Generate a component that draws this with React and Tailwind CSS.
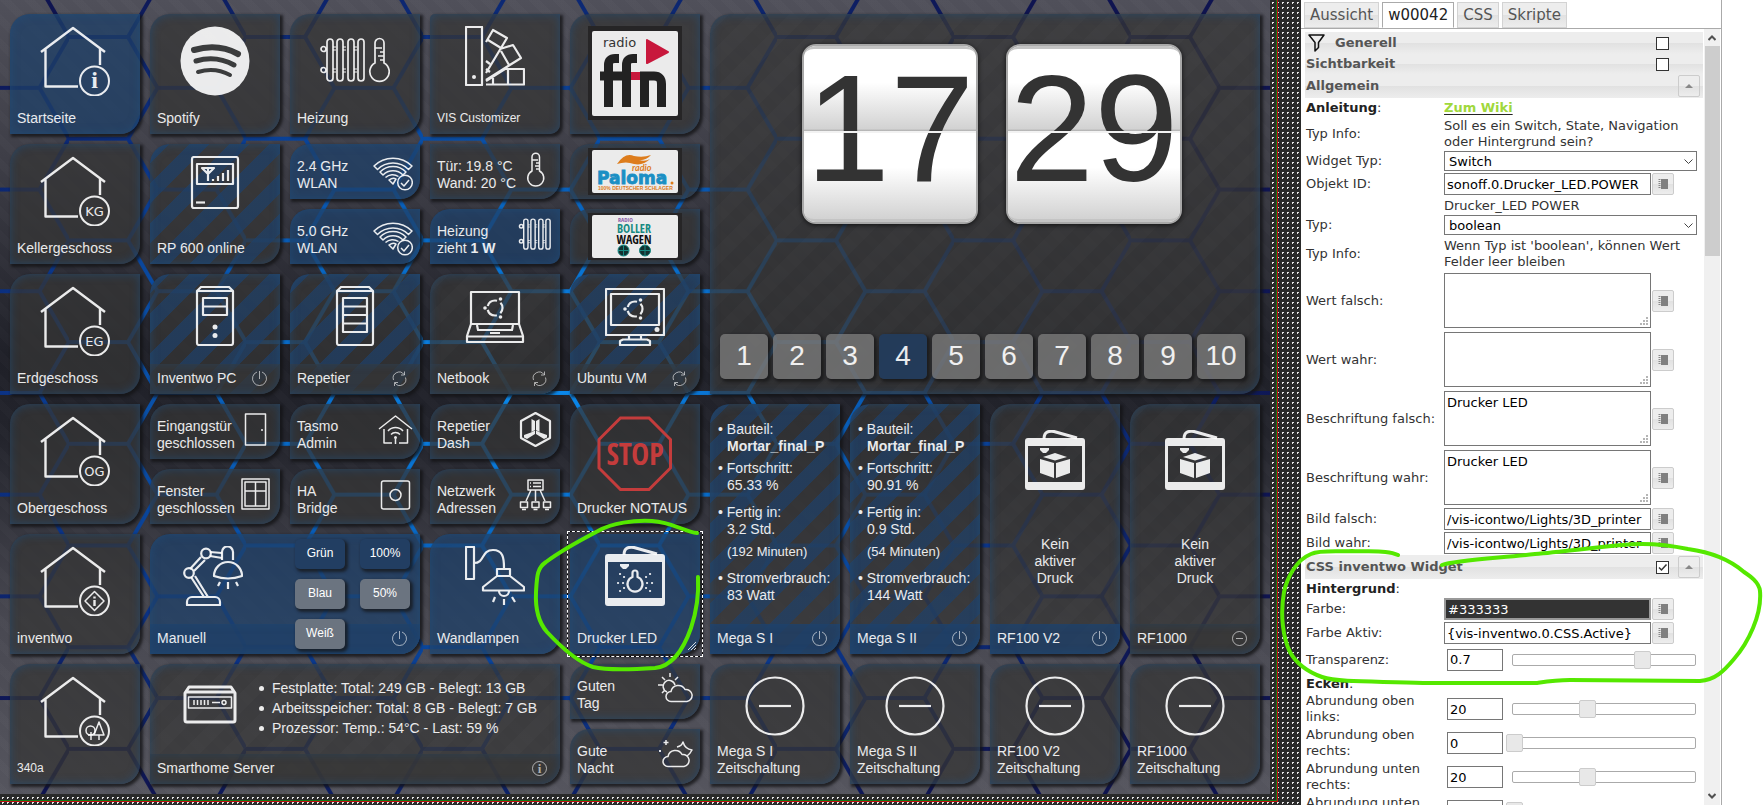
import { useState } from 'react'
import clsx from 'clsx'

const OFF = 'bg-[#363636]/75'
const ON = 'bg-[#1f4068]/75'
const GLOW = 'shadow-[inset_0_0_10px_rgba(32,78,125,0.65),2px_2px_3px_1px_rgba(20,20,22,0.8)]'
const STRIPES_BLUE =
  'bg-[linear-gradient(135deg,#1f4068b8_25%,transparent_25%,transparent_50%,#1f4068b8_50%,#1f4068b8_75%,transparent_75%)] bg-[length:40px_40px]'
const STRIPES_GRAY =
  'bg-[linear-gradient(135deg,#ffffff04_25%,transparent_25%,transparent_50%,#ffffff04_50%,#ffffff04_75%,transparent_75%)] bg-[length:40px_40px]'

/* ---------- icons ---------- */

function Svg({ w, h = w, sw = 2.2, children, className }) {
  return (
    <svg
      width={w}
      height={h}
      viewBox={`0 0 ${w} ${h}`}
      fill="none"
      stroke="currentColor"
      strokeWidth={sw}
      strokeLinejoin="round"
      className={clsx('shrink-0', className)}
      aria-hidden="true"
    >
      {children}
    </svg>
  )
}

function House({ text, children }) {
  return (
    <Svg w={70} sw={2.4}>
      <path d="M1 26 L33 2 L65 26 M5.500 22 V60.500 H38 M60 22 V39" />
      <circle cx="54.500" cy="55" r="14.500" strokeWidth="2" />
      {text && (
        <text
          x="54.500"
          y="59.500"
          textAnchor="middle"
          fill="currentColor"
          stroke="none"
          fontSize="13"
          fontFamily="DejaVu Sans, sans-serif"
        >
          {text}
        </text>
      )}
      {children}
    </Svg>
  )
}

const Spotify = () => (
  <svg width="70" height="70" viewBox="0 0 70 70" aria-hidden="true">
    <circle cx="35" cy="35" r="34.500" fill="currentColor" />
    <g fill="none" stroke="#3b3c3d" strokeLinecap="round">
      <path d="M14 24 Q38 17 58 28" strokeWidth="6" />
      <path d="M16 35 Q36 29 54 39" strokeWidth="5" />
      <path d="M18 46 Q35 41 50 49" strokeWidth="4" />
    </g>
  </svg>
)

const RadiatorBars = () => (
  <>
    {[0, 10, 21, 31].map((x) => (
      <rect key={x} x={7 + x} y="1" width="6" height="42" rx="3" />
    ))}
    {[15, 25, 36].map((x) => (
      <path key={x} d={`M${x - 2} 9 h3 M${x - 2} 12 h3 M${x - 2} 31 h3 M${x - 2} 34 h3`} strokeWidth="1" />
    ))}
    <circle cx="3.500" cy="11" r="2.500" />
    <circle cx="3.500" cy="32" r="2.500" />
  </>
)

const Heating = () => (
  <Svg w={70} h={70} sw={1.7}>
    <g transform="translate(0 12)">
      <RadiatorBars />
      <path d="M55 25 V5 a4.500 4.500 0 0 1 9 0 V25 a9.700 9.700 0 1 1 -9 0 Z M55 10 h7 M60 14 h4 M58 18 h6 M60 22 h4" />
    </g>
  </Svg>
)

const RadiatorSmall = () => (
  <svg width="35" height="35" viewBox="-1 -2 49 49" fill="none" stroke="currentColor" strokeWidth="2" aria-hidden="true">
    <RadiatorBars />
  </svg>
)

const Swatches = () => (
  <Svg w={60}>
    <rect x="1" y="1" width="16" height="58" />
    <circle cx="9" cy="51" r="2" fill="currentColor" stroke="none" />
    <path d="M21 16 L28 4 L42 12 L21 47 M23 14 L36 22 M35 23 L48 19 L56 32 L21 54 M36 25 L44 39 M21 58.500 H59 V43 H40 L21 55 M43 43 V58 M28 58 V52 M21 35 l4 3 M21 43 l4 3" />
  </Svg>
)

const Rp600 = () => (
  <Svg w={60}>
    <rect x="7" y="0" width="46" height="51" rx="2" transform="translate(0 1)" />
    <rect x="12" y="8" width="36" height="20" />
    <path d="M17 12 h12 l-6 6 z M23 12 V25 M28 25 v-2 M33 25 v-5 M38 25 v-8 M43 25 v-11" />
    <path d="M11 46.500 h9" />
  </Svg>
)

const Wifi = () => (
  <Svg w={40} sw={1.5}>
    <path d="M1 14 a27 27 0 0 1 38 0 l-3.500 3.500 a22 22 0 0 0 -31 0 z M7 20 a18 18 0 0 1 26 0 l-3 3 a14 14 0 0 0 -20 0 z M12.500 25.500 a10.500 10.500 0 0 1 13 -1 M16 28 q4 -3 7 -1 l-3 5 z" />
    <circle cx="32" cy="30.500" r="7.300" />
    <path d="M28 31 l3 3 l5 -6" />
  </Svg>
)

const Thermometer = () => (
  <Svg w={35} sw={1.5}>
    <path d="M14 19 V5 a3.500 3.500 0 0 1 7.500 0 V19 a8 8 0 1 1 -7.500 0 Z M14 8 h6 M18 11 h3.500 M17 14 h4.500 M18 17 h3.500" />
  </Svg>
)

const PcTower = ({ server }) => (
  <Svg w={60}>
    <path d="M12 5 L16 1 H44 L48 5 V57 a2 2 0 0 1 -2 2 H14 a2 2 0 0 1 -2 -2 Z M12 5 H48" />
    {server ? (
      <path d="M18 12 H42 V46 H18 Z M18 20.500 H42 M18 29 H42 M18 37.500 H42" />
    ) : (
      <>
        <path d="M18 12 H42 V29 H18 Z M18 20.500 H42" />
        <circle cx="30" cy="41" r="2.500" fill="currentColor" stroke="none" />
        <circle cx="30" cy="49.500" r="2.500" fill="currentColor" stroke="none" />
      </>
    )}
  </Svg>
)

const UbuntuMark = ({ x, y }) => (
  <g transform={`translate(${x} ${y})`}>
    <circle r="7.500" strokeWidth="2.200" strokeDasharray="11.700 4" strokeDashoffset="-9.800" />
    <g fill="currentColor" stroke="none">
      <circle cx="-10" cy="0" r="1.800" />
      <circle cx="5.500" cy="-9" r="1.800" />
      <circle cx="5.500" cy="9" r="1.800" />
    </g>
  </g>
)

const Laptop = () => (
  <Svg w={60}>
    <path d="M6 38 V6 H54 V38 Z M6 38 L2 50 V56 H58 V50 L54 38 M2 50.500 H58 M12 39 L13 44 H47 L48 39 M25 47 H35" />
    <UbuntuMark x={30} y={22} />
  </Svg>
)

const Monitor = () => (
  <Svg w={60}>
    <path d="M1 3 H59 V49 H1 Z M6 8 H54 V39 H6 Z M24 49 V53 M36 49 V53 M15 59 V55 L18 53.500 H42 L45 55 V59 Z" />
    <circle cx="52" cy="43.500" r="2.500" fill="currentColor" stroke="none" />
    <UbuntuMark x={30} y={23} />
  </Svg>
)

const Door = () => (
  <Svg w={35} sw={1.5}>
    <rect x="7.500" y="2" width="20" height="31" />
    <circle cx="24" cy="18" r="1" fill="currentColor" stroke="none" />
  </Svg>
)

const WindowIcon = () => (
  <Svg w={35} sw={1.5}>
    <path d="M4 2 H31 V32 H4 Z M7 5 H28 V29 H7 Z M17.500 5 V29 M7 14 H28" />
  </Svg>
)

const Tasmo = () => (
  <Svg w={35} sw={1.5}>
    <path d="M1 17 L17.500 4 L34 17 M6 17 V31 H14 M21 31 H29.500 V17 M10 19 a10 10 0 0 1 15 0 M13 22.500 a6 6 0 0 1 9 0 M17.500 27 V32" />
    <circle cx="17.500" cy="25.500" r="1.500" fill="currentColor" stroke="none" />
  </Svg>
)

const HaBridge = () => (
  <Svg w={35} sw={1.5}>
    <rect x="3.500" y="4" width="28" height="28" rx="2" />
    <circle cx="17.500" cy="18" r="5.500" />
  </Svg>
)

const RepetierDash = () => (
  <Svg w={35}>
    <path d="M17.500 1 L32 9 V26 L17.500 34 L3 26 V9 Z" />
    <g fill="currentColor" stroke="none">
      <path d="M13.500 7 l3.500 2 v9 l-3.500 2 z M21.500 7 l-3.500 2 v9 l3.500 2 z" />
      <path d="M13 20.500 L17 18.500 V22 L9 27 L6 25.500 V23 Z M22 20.500 L18 18.500 V22 L26 27 L29 25.500 V23 Z" />
    </g>
  </Svg>
)

const Network = () => (
  <Svg w={35} sw={1.5}>
    <path d="M10 3 H25 V13 H10 Z M15 6 h8 M15 9.500 h8 M12 6 h1 M12 9.500 h1 M13 13 L8 24 M17.500 13 V24 M22 13 L27 24" />
    <path d="M2.500 25 h7 v5.500 h-7 z M14 25 h7 v5.500 h-7 z M25.500 25 h7 v5.500 h-7 z M4 32.500 h4 M15.500 32.500 h4 M27 32.500 h4" />
  </Svg>
)

const StopSign = () => (
  <svg width="76" height="76" viewBox="0 0 76 76" className="text-[#c43c3c]" aria-hidden="true">
    <path d="M23.500 2 H52 L73.500 23.500 V52 L52 73.500 H23.500 L2 52 V23.500 Z" fill="none" stroke="currentColor" strokeWidth="3" />
    <text
      x="38"
      y="49"
      textAnchor="middle"
      fill="currentColor"
      fontSize="30"
      fontWeight="700"
      fontFamily="Liberation Sans Narrow, Open Sans Condensed, DejaVu Sans Condensed, sans-serif"
    >
      STOP
    </text>
  </svg>
)

const DeskLamp = () => (
  <Svg w={60}>
    <path d="M4 59 V56 a5 5 0 0 1 5 -5 H32 a5 5 0 0 1 5 5 V59 Z M8 31 L21 51 M12 30 L25 51 M7 23 L18 11 M11 25 L22 14 M27 6 L39 7 M27 10 L39 12" />
    <circle cx="6" cy="27" r="4.800" />
    <circle cx="23" cy="7.500" r="4.800" />
    <path d="M39 14 V6 a5.500 5.500 0 0 1 11 0 V14 M31 30 a14 14 0 0 1 28 0 q-14 5 -28 0 z M37 36 l-2 4 M45 36 v7 M53 36 l2 4" />
  </Svg>
)

const WallLamp = () => (
  <Svg w={60}>
    <path d="M1 1 H9 V33 H1 Z M9 17 C20 17 16 4 28 4 C38 4 39 12 39 22 M32 23 H45 V30 H32 Z M32 30 L18 41 V44.500 H59 V41 L45 30 M34 45 a5 5 0 0 0 10 0 M30 51 l-2 5 M39 53 v6 M47 51 l3 5" />
  </Svg>
)

const Printer = ({ led }) => (
  <Svg w={60}>
    <path d="M19 9 C19 1 24 1 29 1.500 L52 8" strokeWidth="3" />
    <path
      fillRule="evenodd"
      fill="currentColor"
      stroke="none"
      d="M3 8 H57 a3 3 0 0 1 3 3 V57 a3 3 0 0 1 -3 3 H3 a3 3 0 0 1 -3 -3 V11 a3 3 0 0 1 3 -3 Z M3 16 V52 H57 V16 Z"
    />
    <path d="M15 18 H24 V20 L21 23 H18 L15 20 Z" fill="currentColor" stroke="none" />
    {led ? (
      <>
        <path d="M27.500 31 V27 a2.500 2.500 0 0 1 5 0 V31 a7.500 7.500 0 1 1 -5 0 Z" />
        <path
          d="M15 28 h.1 M19 31 h.1 M13 37 h.1 M18 37 h.1 M15 45 h.1 M19 42 h.1 M45 28 h.1 M41 31 h.1 M47 37 h.1 M42 37 h.1 M45 45 h.1 M41 42 h.1"
          strokeLinecap="round"
        />
      </>
    ) : (
      <path
        d="M30 23 L42 27 L30 30.500 L18 27 Z M15 29 L29 33 V48 L15 43 Z M45 29 L31 33 V48 L45 43 Z"
        fill="currentColor"
        stroke="none"
      />
    )}
  </Svg>
)

const ServerBox = () => (
  <Svg w={60}>
    <path d="M4 23 L8 17 H50 L54 23 V50 a2 2 0 0 1 -2 2 H6 a2 2 0 0 1 -2 -2 Z M4 22 H54" strokeWidth="3" transform="translate(0 -2)" />
    <path d="M7.500 25 H50.500 V36 H7.500 Z M13 28 v5 M16.500 28 v5 M20 28 v5 M23.500 28 v5 M27 28 v5 M31 30.500 h8" strokeWidth="1.500" />
    <circle cx="43" cy="30.500" r="2" strokeWidth="1.500" />
  </Svg>
)

const SunCloud = () => (
  <Svg w={35} sw={1.5}>
    <path d="M13 29.500 a5 5 0 0 1 0 -10 a7.500 7.500 0 0 1 14 -2 a6 6 0 0 1 2 12 z M9 20 a6 6 0 1 1 8 -7 M12 1 v4 M4 5 l3 3 M0 13 h5 M4 21 l3 -3 M20 5 l-3 3" />
  </Svg>
)

const MoonCloud = () => (
  <Svg w={35} sw={1.5}>
    <path d="M10 29.500 a5 5 0 0 1 0 -10 a7.500 7.500 0 0 1 14 -2 a6 6 0 0 1 2 12 z M19 10 q5 -1 6 -5 q2 7 9 8 q-2 4 -5 6 M8 3 v5 M5.500 5.500 h5 M2 13 v2 M1 14 h2" />
  </Svg>
)

const Minus60 = () => (
  <Svg w={60}>
    <circle cx="30" cy="30" r="28.500" />
    <path d="M14 30 H46" />
  </Svg>
)

const Power = () => (
  <Svg w={15} sw={1}>
    <path d="M5 1 a7 7 0 1 0 5 0 M7.500 0 V8" />
  </Svg>
)

const Refresh = () => (
  <Svg w={15} sw={1}>
    <path d="M1.500 9 a6 6 0 0 1 10.500 -5.500 M13.500 6.500 a6 6 0 0 1 -10.500 5.500 M12.500 0.500 v3.500 h-3.500 M2.500 15 v-3.500 h3.500" />
  </Svg>
)

const MinusSmall = () => (
  <Svg w={15} sw={1}>
    <circle cx="7.500" cy="7.500" r="7" />
    <path d="M4 7.500 h7" />
  </Svg>
)

const InfoSmall = () => (
  <Svg w={15} sw={1}>
    <circle cx="7.500" cy="7.500" r="7" />
    <text x="7.500" y="11.500" textAnchor="middle" fill="currentColor" stroke="none" fontSize="13" fontWeight="700" fontFamily="Liberation Serif, serif">
      i
    </text>
  </Svg>
)

/* ---------- dashboard ---------- */

function HexBackground() {
  return (
    <svg className="absolute inset-0 h-full w-full" aria-hidden="true">
      <defs>
        <pattern id="hex" width="177" height="101.700" patternUnits="userSpaceOnUse" patternTransform="translate(69 37)">
          <path
            d="M0 0 H59 L88.500 50.850 H147.500 L177 0 M0 101.700 H59 L88.500 50.850 M147.500 50.850 L177 101.700"
            fill="none"
            stroke="#fff"
            strokeWidth="4"
          />
        </pattern>
        <mask id="hexMask">
          <rect width="100%" height="100%" fill="url(#hex)" />
        </mask>
        <radialGradient id="hexGlow" cx="0.42" cy="0.48" r="0.6">
          <stop offset="0" stopColor="#0b8cf0" />
          <stop offset="0.35" stopColor="#0868c4" />
          <stop offset="0.7" stopColor="#0b3284" />
          <stop offset="1" stopColor="#0f1450" />
        </radialGradient>
      </defs>
      <rect width="100%" height="100%" fill="url(#hexGlow)" mask="url(#hexMask)" />
    </svg>
  )
}

function Tile({ as: Tag = 'button', on, stripes, label, small, icon, footer, footerOn, tall, className, children, round }) {
  return (
    <Tag
      className={clsx(
        'relative flex flex-col text-left text-[14px] leading-[17px] text-white/90',
        round || 'rounded-tl-[20px] rounded-br-[20px]',
        on ? ON : OFF,
        stripes === 'blue' && STRIPES_BLUE,
        stripes === 'gray' && STRIPES_GRAY,
        GLOW,
        tall || 'row-span-2',
        className
      )}
    >
      {icon && <span className="flex justify-center pt-3">{icon}</span>}
      {children}
      {footer ? (
        <span
          className={clsx(
            'mt-auto flex h-[30px] items-center justify-between rounded-br-[20px] pr-[13px] pb-[2px] pl-[7px] shadow-[inset_0_0_10px_rgba(32,78,125,0.4)]',
            footerOn ? 'bg-[#1f4068]/80' : 'bg-[#363636]/70'
          )}
        >
          {label}
          <span className="text-white/60">{footer}</span>
        </span>
      ) : (
        label && <span className={clsx('mt-auto whitespace-pre-line px-[7px] pb-[7px]', small && 'text-[12px]')}>{label}</span>
      )}
    </Tag>
  )
}

function SmallTile({ on, label, icon, round }) {
  return (
    <button
      className={clsx(
        'flex justify-between px-[7px] text-left text-[14px] leading-[17px] text-white/90',
        round || 'rounded-tl-[20px] rounded-br-[20px]',
        on ? ON : OFF,
        GLOW
      )}
    >
      <span className="self-end whitespace-pre pb-[7px]">{label}</span>
      <span className="-ml-2 pt-2">{icon}</span>
    </button>
  )
}

function RadioTile({ children }) {
  return (
    <button className={clsx('flex items-center justify-center rounded-tl-[20px] rounded-br-[20px] text-white/90', OFF, GLOW)}>
      {children}
    </button>
  )
}

function FfnLogo() {
  return (
    <svg width="94" height="94" viewBox="0 0 94 94" aria-label="radio ffn">
      <rect width="94" height="94" fill="#262526" />
      <rect x="4" y="5" width="86" height="85" rx="2" fill="#ebebeb" />
      <text x="15" y="21" fontSize="13" fill="#333" fontFamily="DejaVu Sans, sans-serif">radio</text>
      <path d="M59 14 L80 26 L59 37 Z" fill="#c8183c" stroke="#c8183c" strokeWidth="2" strokeLinejoin="round" />
      <rect x="43" y="46" width="9" height="8" fill="#c8183c" />
      {/* bars and arches of the station's mark */}
      <g fill="none" stroke="#222" strokeWidth="9">
        <path d="M20.500 81 V39 Q20.500 32.500 27 32.500 H31 M12 50 H43" />
        <path d="M38.500 81 V39 Q38.500 32.500 45 32.500 H49" />
        <path d="M56.500 81 V50 H66 Q73.500 50 73.500 58 V81" />
      </g>
    </svg>
  )
}

function PalomaLogo() {
  return (
    <svg width="94" height="47" viewBox="0 0 94 47" aria-label="radio Paloma">
      <rect width="94" height="47" fill="#262526" />
      <rect x="4" y="2" width="86" height="43" rx="2" fill="#ebebeb" />
      <path d="M29 16 Q37 4 46 8 Q55 10 63 7 Q58 13 50 12 Q58 14 62 11 Q55 18 46 16 Q38 13 29 16 Z" fill="#dd7c1c" />
      <text x="44" y="23" fontSize="9" fontStyle="italic" fontWeight="700" fill="#dd7c1c" fontFamily="Lato, sans-serif">radio</text>
      <text x="9" y="36" fontSize="17" fontWeight="700" fill="#1b8fc4" stroke="#1b8fc4" strokeWidth="0.800" fontFamily="DejaVu Sans, sans-serif">Paloma</text>
      <circle cx="84" cy="35" r="1.500" fill="#dd7c1c" />
      <text x="10" y="42" fontSize="5" fontWeight="700" fill="#dd7c1c" fontFamily="Liberation Sans, sans-serif">100% DEUTSCHER SCHLAGER</text>
    </svg>
  )
}

function BollerwagenLogo() {
  return (
    <svg width="94" height="47" viewBox="0 0 94 47" aria-label="Radio Bollerwagen">
      <rect width="94" height="47" fill="#262526" />
      <rect x="4" y="2" width="86" height="43" rx="2" fill="#ebebeb" />
      <g fontFamily="Liberation Sans Narrow, Open Sans Condensed, DejaVu Sans Condensed, sans-serif" fontWeight="700">
        <text x="30" y="9" fontSize="6" fill="#8a5aa8">RADIO</text>
        <text x="46" y="20" fontSize="12" fill="#178a82" textAnchor="middle">BOLLER</text>
        <text x="46" y="31" fontSize="12" fill="#111" textAnchor="middle">WAGEN</text>
      </g>
      <g fill="#12302f" stroke="#178a82" strokeWidth="1">
        <circle cx="35.500" cy="37.500" r="5.500" />
        <circle cx="57" cy="37.500" r="5.500" />
        <path d="M30 37.500 h11 M35.500 32 v11 M51.500 37.500 h11 M57 32 v11" />
      </g>
    </svg>
  )
}

function FlipCard({ value }) {
  return (
    <div className="relative flex h-[180px] w-[176px] flex-col overflow-hidden rounded-[14px] border-2 border-[#a8a8a8] bg-white shadow-[0_1px_5px_rgba(0,0,0,0.7)]">
      <div className="h-[87px] rounded-t-[10px] border-t-3 border-[#c4c4c4] bg-linear-to-b from-white from-40% via-[#d2d2d2] via-95% to-[#8f8f8f]" />
      <div className="h-[89px] rounded-b-[10px] border-b-3 border-[#c4c4c4] bg-linear-to-b from-white from-40% to-[#d2d2d2]" />
      <span className="absolute inset-0 flex items-center justify-center pb-3 text-[152px] leading-none text-[#333333]">{value}</span>
      <span className="absolute inset-x-0 top-[85px] h-[2px] bg-[#f2f2f2]" />
    </div>
  )
}

function ClockTile() {
  const [view, setView] = useState(4)
  return (
    <div
      className={clsx(
        'col-span-4 row-span-6 flex flex-col justify-between rounded-tl-[20px] rounded-br-[20px] pt-[30px] pr-[15px] pb-[15px] pl-[10px]',
        OFF,
        STRIPES_GRAY,
        GLOW
      )}
    >
      <div className="flex justify-center gap-7 pl-[19px]">
        <FlipCard value="17" />
        <FlipCard value="29" />
      </div>
      <div className="grid grid-cols-10 gap-[5px]">
        {[1, 2, 3, 4, 5, 6, 7, 8, 9, 10].map((n) => (
          <button
            key={n}
            onClick={() => setView(n)}
            className={clsx(
              'h-[45px] rounded-[5px] pb-[2px] text-[28px] leading-none text-white/90 shadow-[2px_2px_3px_1px_rgba(20,20,22,0.7)]',
              n === view ? 'bg-[#213d60]/85' : 'bg-[#7f7f7f]/75'
            )}
          >
            {n}
          </button>
        ))}
      </div>
    </div>
  )
}

function PrinterJob({ name, progress, hours, minutes, watt }) {
  return (
    <Tile as="div" on={false} stripes="blue" tall="row-span-4" label={name} footer={<Power />} footerOn>
      <ul className="flex flex-col pt-[17px] pl-[17px] whitespace-nowrap">
        <li className="mb-[5px]">
          <span className="-ml-[9px]">• </span>Bauteil:
          <b className="block">Mortar_final_P</b>
        </li>
        <li className="mb-[10px]">
          <span className="-ml-[9px]">• </span>Fortschritt:
          <span className="block">{progress} %</span>
        </li>
        <li className="mb-[10px]">
          <span className="-ml-[9px]">• </span>Fertig in:
          <span className="mb-[5px] block">{hours} Std.</span>
          <span className="block text-[13px]">({minutes} Minuten)</span>
        </li>
        <li>
          <span className="-ml-[9px]">• </span>Stromverbrauch:
          <span className="block">{watt} Watt</span>
        </li>
      </ul>
    </Tile>
  )
}

function IdlePrinter({ name, footer, footerOn }) {
  return (
    <Tile as="div" stripes="gray" tall="row-span-4" label={name} footer={footer} footerOn={footerOn}>
      <span className="flex justify-center pt-[26px]">
        <Printer />
      </span>
      <span className="mt-[46px] text-center whitespace-pre-line">{'Kein\naktiver\nDruck'}</span>
    </Tile>
  )
}

const LIGHTS = [
  ['Grün', true],
  ['100%', true],
  ['Blau', false],
  ['50%', false],
  ['Weiß', false],
]

function LightTile() {
  return (
    <Tile as="div" on className="col-span-2" label="Manuell" footer={<Power />} footerOn>
      <span className="pt-3 pl-[33px]">
        <DeskLamp />
      </span>
      <div className="absolute top-[5px] right-[10px] grid grid-cols-2 gap-x-[15px] gap-y-[10px]">
        {LIGHTS.map(([name, active]) => (
          <button
            key={name}
            className={clsx(
              'h-[30px] w-[50px] rounded-[5px] pb-px text-[12px] text-white shadow-[2px_2px_3px_1px_rgba(20,20,22,0.7)]',
              active ? 'bg-[#223e62]' : 'bg-[#6b7480]'
            )}
          >
            {name}
          </button>
        ))}
      </div>
    </Tile>
  )
}

const SERVER_STATS = [
  'Festplatte: Total: 249 GB - Belegt: 13 GB',
  'Arbeitsspeicher: Total: 8 GB - Belegt: 7 GB',
  'Prozessor: Temp.: 54°C - Last: 59 %',
]

function ServerTile() {
  return (
    <Tile as="div" stripes="gray" className="col-span-3" label="Smarthome Server" footer={<InfoSmall />}>
      <div className="flex pt-2 pl-[31px]">
        <ServerBox />
        <ul className="pt-[6px] pl-[18px] leading-5 whitespace-nowrap">
          {SERVER_STATS.map((line) => (
            <li key={line} className="flex items-center gap-[8px]">
              <span className="h-[5px] w-[5px] rounded-full bg-white/90" />
              {line}
            </li>
          ))}
        </ul>
      </div>
    </Tile>
  )
}

function SelectedTile() {
  return (
    <div className="relative row-span-2 flex">
      <Tile on className="flex-1" label="Drucker LED" icon={<Printer led />} />
      <span className="pointer-events-none absolute -inset-[3px] border border-black" />
      <span className="pointer-events-none absolute -inset-[3px] border border-dashed border-white" />
      <svg className="absolute right-1 bottom-1 text-white/80" width="8" height="8" viewBox="0 0 8 8" stroke="currentColor" aria-hidden="true">
        <path d="M0 8 L8 0 M3 8 L8 3 M6 8 L8 6" />
      </svg>
    </div>
  )
}

function Dashboard() {
  return (
    <div className="relative bg-[repeating-linear-gradient(45deg,#ffffff04_0_8px,transparent_8px_17px),linear-gradient(#50505a,#3e3e47_20%,#1f2028_45%,#23242c_55%,#484851_78%,#55555e)]">
      <HexBackground />
      <div className="relative grid auto-rows-[55px] grid-cols-9 gap-[10px] px-[10px] pt-[14px] pb-[10px]">
        <Tile
          on
          label="Startseite"
          icon={
            <House>
              <text x="54.500" y="62" textAnchor="middle" fill="currentColor" stroke="none" fontSize="24" fontWeight="700" fontFamily="Liberation Serif, serif">
                i
              </text>
            </House>
          }
        />
        <Tile label="Spotify" icon={<Spotify />} />
        <Tile label="Heizung" icon={<Heating />} />
        <Tile label="VIS Customizer" small icon={<Swatches />} round="rounded-tl-[5px] rounded-br-[10px]" />
        <Tile icon={<FfnLogo />} />
        <ClockTile />

        <Tile label="Kellergeschoss" icon={<House text="KG" />} />
        <Tile label="RP 600 online" stripes="blue" icon={<Rp600 />} />
        <SmallTile on label={'2.4 GHz\nWLAN'} icon={<Wifi />} />
        <SmallTile label={'Tür: 19.8 °C\nWand: 20 °C'} icon={<Thermometer />} round="rounded-br-[20px]" />
        <RadioTile>
          <PalomaLogo />
        </RadioTile>
        <SmallTile on label={'5.0 GHz\nWLAN'} icon={<Wifi />} />
        <SmallTile on label={<>Heizung{'\n'}zieht <b>1 W</b></>} icon={<RadiatorSmall />} round="rounded-tl-[20px] rounded-br-[10px]" />
        <RadioTile>
          <BollerwagenLogo />
        </RadioTile>

        <Tile label="Erdgeschoss" icon={<House text="EG" />} />
        <Tile label="Inventwo PC" stripes="blue" icon={<PcTower />} footer={<Power />} />
        <Tile label="Repetier" stripes="blue" icon={<PcTower server />} footer={<Refresh />} />
        <Tile label="Netbook" stripes="gray" icon={<Laptop />} footer={<Refresh />} />
        <Tile label="Ubuntu VM" stripes="blue" icon={<Monitor />} footer={<Refresh />} />

        <Tile label="Obergeschoss" icon={<House text="OG" />} />
        <SmallTile label={'Eingangstür\ngeschlossen'} icon={<Door />} />
        <SmallTile label={'Tasmo\nAdmin'} icon={<Tasmo />} />
        <SmallTile label={'Repetier\nDash'} icon={<RepetierDash />} />
        <Tile label="Drucker NOTAUS" icon={<StopSign />} />
        <PrinterJob name="Mega S I" progress="65.33" hours="3.2" minutes="192" watt="83" />
        <PrinterJob name="Mega S II" progress="90.91" hours="0.9" minutes="54" watt="144" />
        <IdlePrinter name="RF100 V2" footer={<Power />} footerOn />
        <IdlePrinter name="RF1000" footer={<MinusSmall />} />
        <SmallTile label={'Fenster\ngeschlossen'} icon={<WindowIcon />} />
        <SmallTile label={'HA\nBridge'} icon={<HaBridge />} />
        <SmallTile label={'Netzwerk\nAdressen'} icon={<Network />} />

        <Tile
          label="inventwo"
          icon={
            <House>
              <path d="M54.500 45.500 L64 55 L54.500 64.500 L45 55 Z" strokeWidth="1.500" />
              <path d="M54.500 50.500 v2 M54.500 54 v6" />
            </House>
          }
        />
        <LightTile />
        <Tile on label="Wandlampen" icon={<WallLamp />} />
        <SelectedTile />

        <Tile
          label="340a"
          small
          icon={
            <House>
              <path d="M54 59 L59 46 L64 59 Z M59 59 v5 M51 56 v8 M48 59 h6" strokeWidth="1.500" />
              <circle cx="50.500" cy="54.500" r="4.500" strokeWidth="1.500" />
            </House>
          }
        />
        <ServerTile />
        <SmallTile label={'Guten\nTag'} icon={<SunCloud />} />
        <Tile label={'Mega S I\nZeitschaltung'} icon={<Minus60 />} />
        <Tile label={'Mega S II\nZeitschaltung'} icon={<Minus60 />} />
        <Tile label={'RF100 V2\nZeitschaltung'} icon={<Minus60 />} />
        <Tile label={'RF1000\nZeitschaltung'} icon={<Minus60 />} />
        <SmallTile label={'Gute\nNacht'} icon={<MoonCloud />} />
      </div>
    </div>
  )
}

/* ---------- property panel ---------- */

const BAR = 'bg-[linear-gradient(#ededed_50%,#e1e1e1_50%,#ededed)]'

function Section({ title, checked, open, icon, className }) {
  return (
    <div className={clsx('flex items-center pl-px font-bold text-[#555555]', BAR, className)}>
      {icon}
      <h3 className="flex-1">{title}</h3>
      {checked !== undefined && (
        <span className={clsx('relative flex h-[13px] w-[13px]', open ? 'mr-[9px]' : 'mr-[34px]')}>
          <input
            type="checkbox"
            aria-label={title}
            defaultChecked={checked}
            className="h-[13px] w-[13px] appearance-none border border-[#333333] bg-white"
          />
          {checked && (
            <svg className="pointer-events-none absolute inset-0" width="13" height="13" viewBox="0 0 13 13" fill="none" stroke="#333" strokeWidth="1.500" aria-hidden="true">
              <path d="M3 6.500 L5.500 9 L10.500 3.500" />
            </svg>
          )}
        </span>
      )}
      {open && (
        <button
          aria-label={`${title} einklappen`}
          className={clsx('mr-[3px] flex h-[22px] w-[22px] items-center justify-center rounded-xs border border-[#cccccc]', BAR)}
        >
          <svg width="8" height="4" viewBox="0 0 8 4" fill="#888" aria-hidden="true">
            <path d="M0 4 L4 0 L8 4 Z" />
          </svg>
        </button>
      )}
    </div>
  )
}

function Row({ label, id, bold, className = 'h-6', children }) {
  const Label = id ? 'label' : 'span'
  return (
    <div className={clsx('grid shrink-0 grid-cols-[138px_1fr] items-center pl-px', className)}>
      <Label htmlFor={id} className="pr-1">
        {bold ? <b className="text-[#222222]">{label}</b> : label}
        {label && ':'}
      </Label>
      <div className="flex items-center">{children}</div>
    </div>
  )
}

function EditButton() {
  return (
    <button aria-label="Bearbeiten" className={clsx('ml-px flex h-[22px] w-[22px] items-center justify-center rounded-xs border border-[#cccccc]', BAR)}>
      <svg width="10" height="10" viewBox="0 0 10 10" aria-hidden="true">
        <rect x="3" width="7" height="10" fill="#808080" />
        <path d="M1.500 0 V10" stroke="#888" strokeWidth="2" strokeDasharray="1 1" />
      </svg>
    </button>
  )
}

function SelectRow({ label, id, value }) {
  return (
    <Row label={label} id={id} className="h-[22px]">
      <div className="relative flex">
        <select id={id} className="h-5 w-[253px] appearance-none border border-[#767676] bg-white pl-1 text-black" defaultValue={value}>
          <option>{value}</option>
        </select>
        <svg className="pointer-events-none absolute top-2 right-1" width="9" height="6" viewBox="0 0 9 6" fill="none" stroke="#444" aria-hidden="true">
          <path d="M0.500 0.500 L4.500 4.500 L8.500 0.500" />
        </svg>
      </div>
    </Row>
  )
}

function TextRow({ label, id, value, dark }) {
  return (
    <Row label={label} id={id}>
      <input
        id={id}
        defaultValue={value}
        className={clsx(
          'h-[22px] w-[207px] border px-[2px]',
          dark ? 'border-2 border-[#999999] bg-[#333333] text-white' : 'border-[#767676] bg-white text-black'
        )}
      />
      <EditButton />
    </Row>
  )
}

function AreaRow({ label, id, value }) {
  return (
    <Row label={label} id={id} className="h-[59px]">
      <span className="relative flex">
        <textarea id={id} defaultValue={value} className="h-[55px] w-[207px] resize-none border border-[#767676] bg-white px-[2px] pt-[3px] leading-4 text-black" />
        <svg className="pointer-events-none absolute right-[3px] bottom-[3px]" width="8" height="8" viewBox="0 0 8 8" fill="#b5b5b5" aria-hidden="true">
          <path d="M6 0h2v2h-2z M3 3h2v2h-2z M6 3h2v2h-2z M0 6h2v2h-2z M3 6h2v2h-2z M6 6h2v2h-2z" />
        </svg>
      </span>
      <EditButton />
    </Row>
  )
}

function SliderRow({ label, id, value, max, step = 1, className = 'h-[34px] leading-4' }) {
  const [val, setVal] = useState(value)
  return (
    <Row label={label} id={id} className={className}>
      <input
        id={id}
        value={val}
        onChange={(e) => setVal(e.target.value)}
        className="ml-[3px] h-[22px] w-[56px] border border-[#767676] bg-white px-[2px] text-black"
      />
      <div className="ml-[9px] flex h-3 w-[184px] items-center rounded-xs border border-[#aaaaaa]">
        <input
          type="range"
          aria-label={label}
          min="0"
          max={max}
          step={step}
          value={val}
          onChange={(e) => setVal(e.target.value)}
          className="-ml-[7px] h-[18px] w-[200px] shrink-0 appearance-none bg-transparent [&::-webkit-slider-thumb]:h-[18px] [&::-webkit-slider-thumb]:w-[17px] [&::-webkit-slider-thumb]:appearance-none [&::-webkit-slider-thumb]:rounded-xs [&::-webkit-slider-thumb]:border [&::-webkit-slider-thumb]:border-[#cccccc] [&::-webkit-slider-thumb]:bg-[#e8e8e8]"
        />
      </div>
    </Row>
  )
}

function Funnel() {
  return (
    <svg className="mr-[10px] ml-[2px]" width="17" height="18" viewBox="0 0 17 18" fill="none" stroke="#111" strokeWidth="1.500" aria-hidden="true">
      <path d="M1 1 H16 L10.500 8.500 V13.500 L7 17 V8.500 Z" strokeLinejoin="round" />
    </svg>
  )
}

function Tabs() {
  return (
    <nav className="flex h-[29px] shrink-0 items-end gap-[3px] border-b border-[#aaaaaa] pl-[3px] text-[15px] leading-none text-[#555555]">
      {['Aussicht', 'w00042', 'CSS', 'Skripte'].map((tab) => (
        <button
          key={tab}
          className={clsx(
            'h-[26px] border px-[5px]',
            tab === 'w00042' ? 'border-[#aaaaaa] border-b-white bg-white text-[#222222]' : ['border-[#d3d3d3]', BAR]
          )}
        >
          {tab}
        </button>
      ))}
    </nav>
  )
}

function PropertyPanel() {
  return (
    <aside className="h-full w-[462px] shrink-0 bg-white font-['DejaVu_Sans',Verdana,sans-serif] text-[13px] text-[#333333]">
      <div className="flex h-full w-[421px] flex-col border-r border-[#aaaaaa]">
        <Tabs />
        <div className="flex min-h-0 flex-1 justify-between pr-px pl-1">
          <div className="flex w-[398px] flex-col overflow-hidden pt-[3px]">
            <Section title="Generell" checked={false} icon={<Funnel />} className="h-[22px] shrink-0" />
            <Section title="Sichtbarkeit" checked={false} className="h-5 shrink-0" />
            <Section title="Allgemein" open className="h-6 shrink-0" />

            <Row label="Anleitung" bold className="h-5">
              <a href="#wiki" className="font-bold text-[#a0d83c] underline decoration-[#222222] underline-offset-2">
                Zum Wiki
              </a>
            </Row>
            <Row label="Typ Info" className="h-8 leading-4">
              Soll es ein Switch, State, Navigation
              <br />
              oder Hintergrund sein?
            </Row>
            <SelectRow label="Widget Typ" id="widget-typ" value="Switch" />
            <TextRow label="Objekt ID" id="objekt-id" value="sonoff.0.Drucker_LED.POWER" />
            <Row className="h-[18px]">Drucker_LED POWER</Row>
            <SelectRow label="Typ" id="typ" value="boolean" />
            <Row label="Typ Info" className="h-[35px] leading-4">
              Wenn Typ ist 'boolean', können Wert
              <br />
              Felder leer bleiben
            </Row>
            <AreaRow label="Wert falsch" id="wert-falsch" />
            <AreaRow label="Wert wahr" id="wert-wahr" />
            <AreaRow label="Beschriftung falsch" id="text-falsch" value="Drucker LED" />
            <AreaRow label="Beschriftung wahr" id="text-wahr" value="Drucker LED" />
            <TextRow label="Bild falsch" id="bild-falsch" value="/vis-icontwo/Lights/3D_printer" />
            <TextRow label="Bild wahr" id="bild-wahr" value="/vis-icontwo/Lights/3D_printer" />

            <Section title="CSS inventwo Widget" checked open className="h-6 shrink-0" />
            <Row label="Hintergrund" bold className="h-[18px]" />
            <TextRow label="Farbe" id="farbe" value="#333333" dark />
            <TextRow label="Farbe Aktiv" id="farbe-aktiv" value="{vis-inventwo.0.CSS.Active}" />
            <SliderRow label="Transparenz" id="transparenz" value="0.7" max="1" step="0.1" className="h-[29px]" />
            <Row label="Ecken" bold className="h-[18px]" />
            <SliderRow label="Abrundung oben links" id="ecke-ol" value="20" max="50" />
            <SliderRow label="Abrundung oben rechts" id="ecke-or" value="0" max="50" />
            <SliderRow label="Abrundung unten rechts" id="ecke-ur" value="20" max="50" />
            <SliderRow label="Abrundung unten links" id="ecke-ul" value="0" max="50" />
          </div>

          {/* scrollbar */}
          <div className="flex w-4 flex-col items-center justify-between bg-[#f0f0f0] py-[6px]">
            <svg width="8" height="6" viewBox="0 0 8 6" fill="none" stroke="#505050" strokeWidth="2" aria-hidden="true">
              <path d="M0.500 5 L4 1.500 L7.500 5" />
            </svg>
            <div className="mt-[5px] mb-auto h-[210px] w-[15px] bg-[#cdcdcd]" />
            <svg width="8" height="6" viewBox="0 0 8 6" fill="none" stroke="#505050" strokeWidth="2" aria-hidden="true">
              <path d="M0.500 1 L4 4.500 L7.500 1" />
            </svg>
          </div>
        </div>
      </div>
    </aside>
  )
}

function Markings() {
  return (
    <svg
      className="pointer-events-none absolute top-0 left-0"
      width="1763"
      height="805"
      fill="none"
      stroke="#55e800"
      strokeWidth="4"
      strokeLinecap="round"
      strokeLinejoin="round"
      aria-hidden="true"
    >
      <path d="M697 533 C685 532 672 522 652 521 C634 520 612 523 598 531 C575 543 558 553 546 562 C537 568 537 576 536 592 C535 612 540 624 547 632 C560 646 578 662 593 667 C610 671 640 669 655 668 C675 666 685 645 691 628 C697 610 699 595 698 577" />
      <path d="M1398 555 C1388 550 1372 552 1352 551 C1335 552 1320 550 1311 554 C1296 560 1287 578 1284 592 C1280 615 1283 638 1290 652 C1296 663 1308 672 1322 677 C1340 683 1380 681 1423 683 L1537 683 C1550 681 1556 680 1570 680 L1700 681 C1715 680 1724 671 1734 659 C1748 643 1762 615 1760 591 C1759 582 1750 576 1744 572 C1728 558 1710 552 1688 549 C1665 544 1640 543 1622 545 C1590 548 1560 552 1535 554 C1500 558 1455 560 1442 565" />
    </svg>
  )
}

export default function App() {
  return (
    <div className="relative flex h-screen overflow-hidden bg-white font-['Liberation_Sans',Arial,sans-serif]">
      {/* dotted stage with the green/red page bounds */}
      <main className="min-w-0 flex-1 bg-[#2a2a2a] bg-[radial-gradient(circle_at_50%_50%,#e8e8e8_1px,transparent_1px)] bg-[length:5px_5px]">
        <div className="mr-[23px] border-r border-b border-[#c01010]">
          <div className="border-r border-b border-[#127a12] pr-[6px] pb-[6px]">
            <Dashboard />
          </div>
        </div>
      </main>
      <PropertyPanel />
      <Markings />
    </div>
  )
}
